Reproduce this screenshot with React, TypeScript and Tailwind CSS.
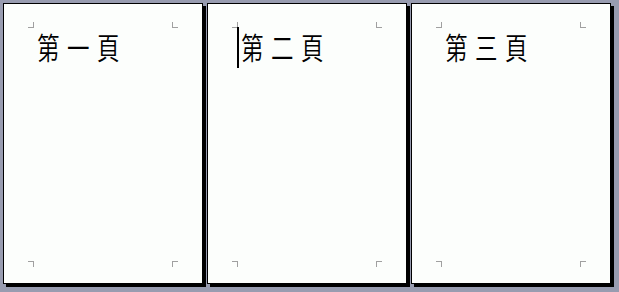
const pages = [
  { label: '第一頁', caret: false },
  { label: '第二頁', caret: true },
  { label: '第三頁', caret: false },
]

function Page({ label, caret }: { label: string; caret: boolean }) {
  return (
    <div className="w-[200px] h-[281px] border border-black bg-[#fcfefc] shadow-[3px_3px_0_#000] pt-[24px] pb-[22px] px-[30px] flex">
      <div className="relative flex-1">
        {/* margin marks */}
        <span className="absolute -left-[6px] -top-[6px] w-[6px] h-[6px] border-r border-b border-[#a0a0a0]" />
        <span className="absolute -right-[6px] -top-[6px] w-[6px] h-[6px] border-l border-b border-[#a0a0a0]" />
        <span className="absolute -left-[6px] -bottom-[6px] w-[6px] h-[6px] border-r border-t border-[#a0a0a0]" />
        <span className="absolute -right-[6px] -bottom-[6px] w-[6px] h-[6px] border-l border-t border-[#a0a0a0]" />
        {caret && <span className="absolute -left-px -top-px w-[2px] h-[41px] bg-black" />}
        <div className="mt-[3px] pl-[4px] text-[30px] leading-[30px] tracking-[10px] scale-x-75 origin-left whitespace-nowrap font-[350] text-black font-['Noto_Sans_CJK_TC',sans-serif]">
          {label}
        </div>
      </div>
    </div>
  )
}

export default function App() {
  return (
    <div className="w-[619px] h-[292px] bg-[#989cb0] flex gap-[4px] pl-[3px] pt-[3px]">
      {pages.map((p) => (
        <Page key={p.label} label={p.label} caret={p.caret} />
      ))}
    </div>
  )
}
